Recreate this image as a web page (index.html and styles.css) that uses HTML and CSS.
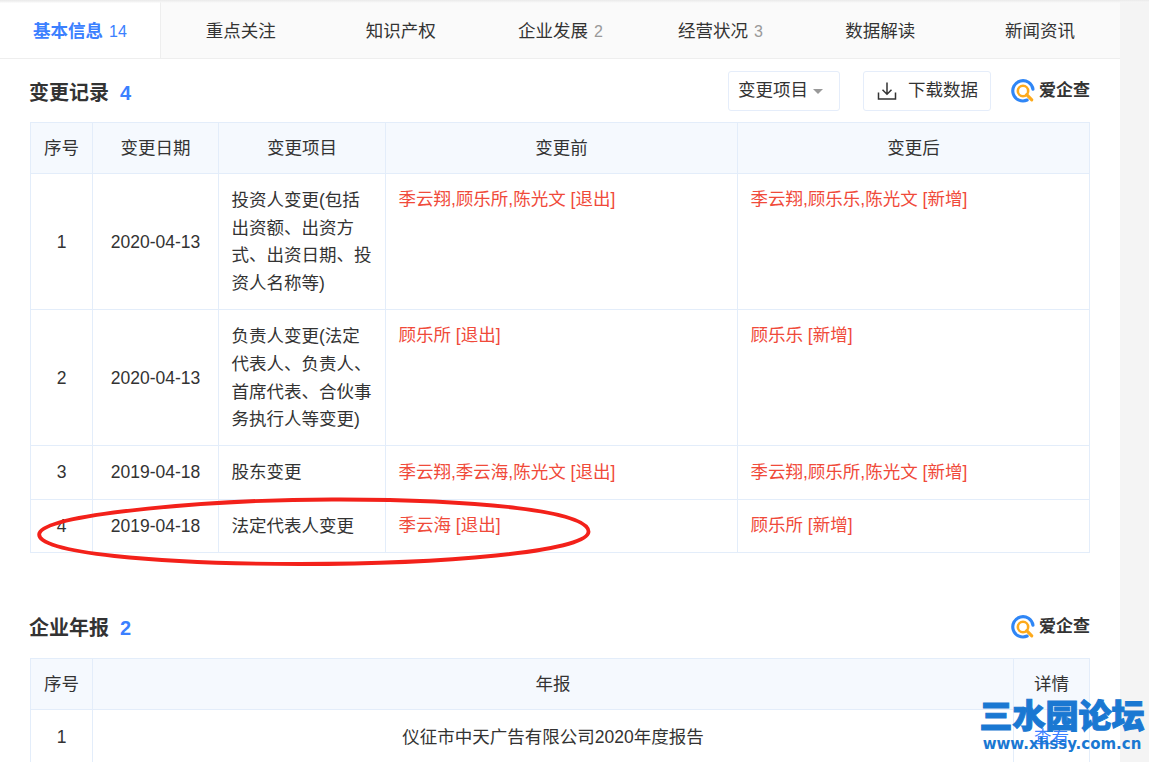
FILE: index.html
```html
<!DOCTYPE html>
<html lang="zh-CN">
<head>
<meta charset="utf-8">
<title>变更记录</title>
<link rel="stylesheet" href="styles.css">
</head>
<body>
<svg class="defs" width="0" height="0" aria-hidden="true">
  <symbol id="aiq" viewBox="0 0 26 26">
    <path d="M17.500 22.800A11 11 0 1 1 23.800 11" fill="none" stroke="#2f86f6" stroke-width="3.400" stroke-linecap="round"/>
    <circle cx="13" cy="13" r="5.600" fill="none" stroke="#fdaa1c" stroke-width="2.800"/>
    <path d="M17 17L22.500 22.500" fill="none" stroke="#fdaa1c" stroke-width="3.400" stroke-linecap="round"/>
  </symbol>
</svg>
<main class="main">
  <nav class="tabs">
    <a class="tab active">基本信息<span class="count">14</span></a>
    <a class="tab">重点关注</a>
    <a class="tab">知识产权</a>
    <a class="tab">企业发展<span class="count">2</span></a>
    <a class="tab">经营状况<span class="count">3</span></a>
    <a class="tab">数据解读</a>
    <a class="tab">新闻资讯</a>
  </nav>

  <section class="section">
    <header class="head">
      <h2 class="title">变更记录<span class="num">4</span></h2>
      <div class="tools">
        <button class="btn select">变更项目<i class="caret"></i></button>
        <button class="btn download">
          <svg class="dl" width="20" height="20" viewBox="0 0 20 20" aria-hidden="true"><path d="M10 1.500V13M5.500 8.800L10 13.300l4.500-4.500M1.500 11.500V18h17v-6.500" fill="none" stroke="#333" stroke-width="1.500"/></svg>
          下载数据
        </button>
        <div class="logo"><svg width="24" height="24"><use href="#aiq"/></svg><span>爱企查</span></div>
      </div>
    </header>
    <table class="grid">
      <colgroup><col class="c1"><col class="c2"><col class="c3"><col class="c4"><col class="c4"></colgroup>
      <thead><tr class="hrow"><th>序号</th><th>变更日期</th><th>变更项目</th><th>变更前</th><th>变更后</th></tr></thead>
      <tbody>
        <tr><td class="mid">1</td><td class="mid">2020-04-13</td><td>投资人变更(包括出资额、出资方式、出资日期、投资人名称等)</td><td class="red">季云翔,顾乐所,陈光文 [退出]</td><td class="red">季云翔,顾乐乐,陈光文 [新增]</td></tr>
        <tr><td class="mid">2</td><td class="mid">2020-04-13</td><td>负责人变更(法定代表人、负责人、首席代表、合伙事务执行人等变更)</td><td class="red">顾乐所 [退出]</td><td class="red">顾乐乐 [新增]</td></tr>
        <tr><td class="mid">3</td><td class="mid">2019-04-18</td><td>股东变更</td><td class="red">季云翔,季云海,陈光文 [退出]</td><td class="red">季云翔,顾乐所,陈光文 [新增]</td></tr>
        <tr><td class="mid">4</td><td class="mid">2019-04-18</td><td>法定代表人变更</td><td class="red">季云海 [退出]</td><td class="red">顾乐所 [新增]</td></tr>
      </tbody>
    </table>
  </section>

  <section class="section second">
    <header class="head">
      <h2 class="title">企业年报<span class="num">2</span></h2>
      <div class="tools">
        <div class="logo"><svg width="24" height="24"><use href="#aiq"/></svg><span>爱企查</span></div>
      </div>
    </header>
    <table class="grid">
      <colgroup><col class="c1"><col><col class="c6"></colgroup>
      <thead><tr class="hrow"><th>序号</th><th>年报</th><th>详情</th></tr></thead>
      <tbody>
        <tr><td class="mid">1</td><td class="mid">仪征市中天广告有限公司2020年度报告</td><td class="mid"><a class="link">查看</a></td></tr>
      </tbody>
    </table>
  </section>
</main>

<svg class="ring" width="560" height="72" viewBox="34 496 560 72" aria-hidden="true">
  <path d="M39.500 533C48 513 220 499 340 499.500C480 500 590 511 588.500 532C587 552 440 564 300 564C160 564 32 553 39.500 533Z" fill="none" stroke="#f3211a" stroke-width="3.800"/>
</svg>

<div class="mark">
  <div class="mark-cn">三水园论坛</div>
  <div class="mark-en">www.xhssy.com.cn</div>
</div>
</body>
</html>
```

FILE: styles.css
```css
* { box-sizing: border-box; }
html, body { margin: 0; height: 762px; overflow: hidden; }
body {
  position: relative;
  background: #f4f4f4;
  color: #333;
  font: 17.5px/27.7px "Liberation Sans", "Noto Sans CJK SC", sans-serif;
}
.defs { position: absolute; }
.main { width: 1120px; height: 762px; padding-top: 2px; background: #fff; }
body::before { content: ""; position: absolute; left: 0; right: 0; top: 0; height: 3px; background: linear-gradient(#eaeaea, #f5f5f5 70%, rgba(245,245,245,0)); }

.tabs { display: flex; height: 57px; background: #fafafa; border-bottom: 1px solid #eeeeee; }
.tab { flex: 1; display: flex; align-items: center; justify-content: center; padding-top: 3px; color: #333; }
.tab.active { background: #fff; color: #3b80ff; font-weight: 700; border-right: 1px solid #eeeeee; }
.count { margin-left: 6px; font-size: 16px; font-weight: 400; color: #999; }
.active .count { color: #3b80ff; }

.section { padding: 0 30px; }
.second { margin-top: 42px; }
.head { display: flex; align-items: center; justify-content: space-between; height: 63px; }
.title { margin: 0 0 0 -1px; padding-top: 4px; font-size: 20px; line-height: 28px; font-weight: 700; color: #333; }
.num { margin-left: 11px; color: #3b80ff; }
.tools { display: flex; align-items: center; gap: 23px; margin-top: 1px; }

.btn {
  display: flex; align-items: center; height: 40px; padding: 0;
  background: #fff; border: 1px solid #e5edfa; border-radius: 3px;
  font: inherit; color: #333;
}
.select { width: 112px; padding-left: 9px; }
.caret { margin-left: 5px; border: 5px solid transparent; border-top: 5px solid #999; border-bottom: 0; }
.download { width: 128px; padding-left: 13px; gap: 11px; }
.logo { display: flex; align-items: center; gap: 4px; margin-left: -3px; font-size: 17px; line-height: 24px; font-weight: 700; color: #333; }
.logo svg { display: block; }

.grid { width: 1060px; table-layout: fixed; border-collapse: collapse; }
.c1 { width: 62px; }
.c2 { width: 126px; }
.c3 { width: 167px; }
.c4 { width: 352px; }
.c6 { width: 76px; }
.grid th, .grid td { border: 1px solid #e3edfa; }
.grid th { height: 51px; padding: 2px 0 0; font-weight: 400; background: #f5f9fe; text-align: center; }
.grid td { padding: 13px 13px 11.400px 12.500px; vertical-align: top; text-align: left; word-break: break-all; }
.grid td.mid { vertical-align: middle; text-align: center; padding-left: 13px; }
.grid td.red { padding-top: 12.200px; padding-bottom: 12.200px; color: #f04a3a; }
.second .grid td.mid { padding-top: 14px; }
.link { color: #3b80ff; }

.ring { position: absolute; left: 34px; top: 496px; }
.mark { position: absolute; left: 979px; top: 694px; width: 166px; color: #1a78d2; font-weight: 900; text-align: center; }
.mark-cn { font: 900 33px/40px "Noto Sans CJK SC", sans-serif; white-space: nowrap; -webkit-text-stroke: 1px #1a78d2; }
.mark-en { font: 700 15px/16px "DejaVu Sans", sans-serif; white-space: nowrap; margin-top: 2px; }
```
